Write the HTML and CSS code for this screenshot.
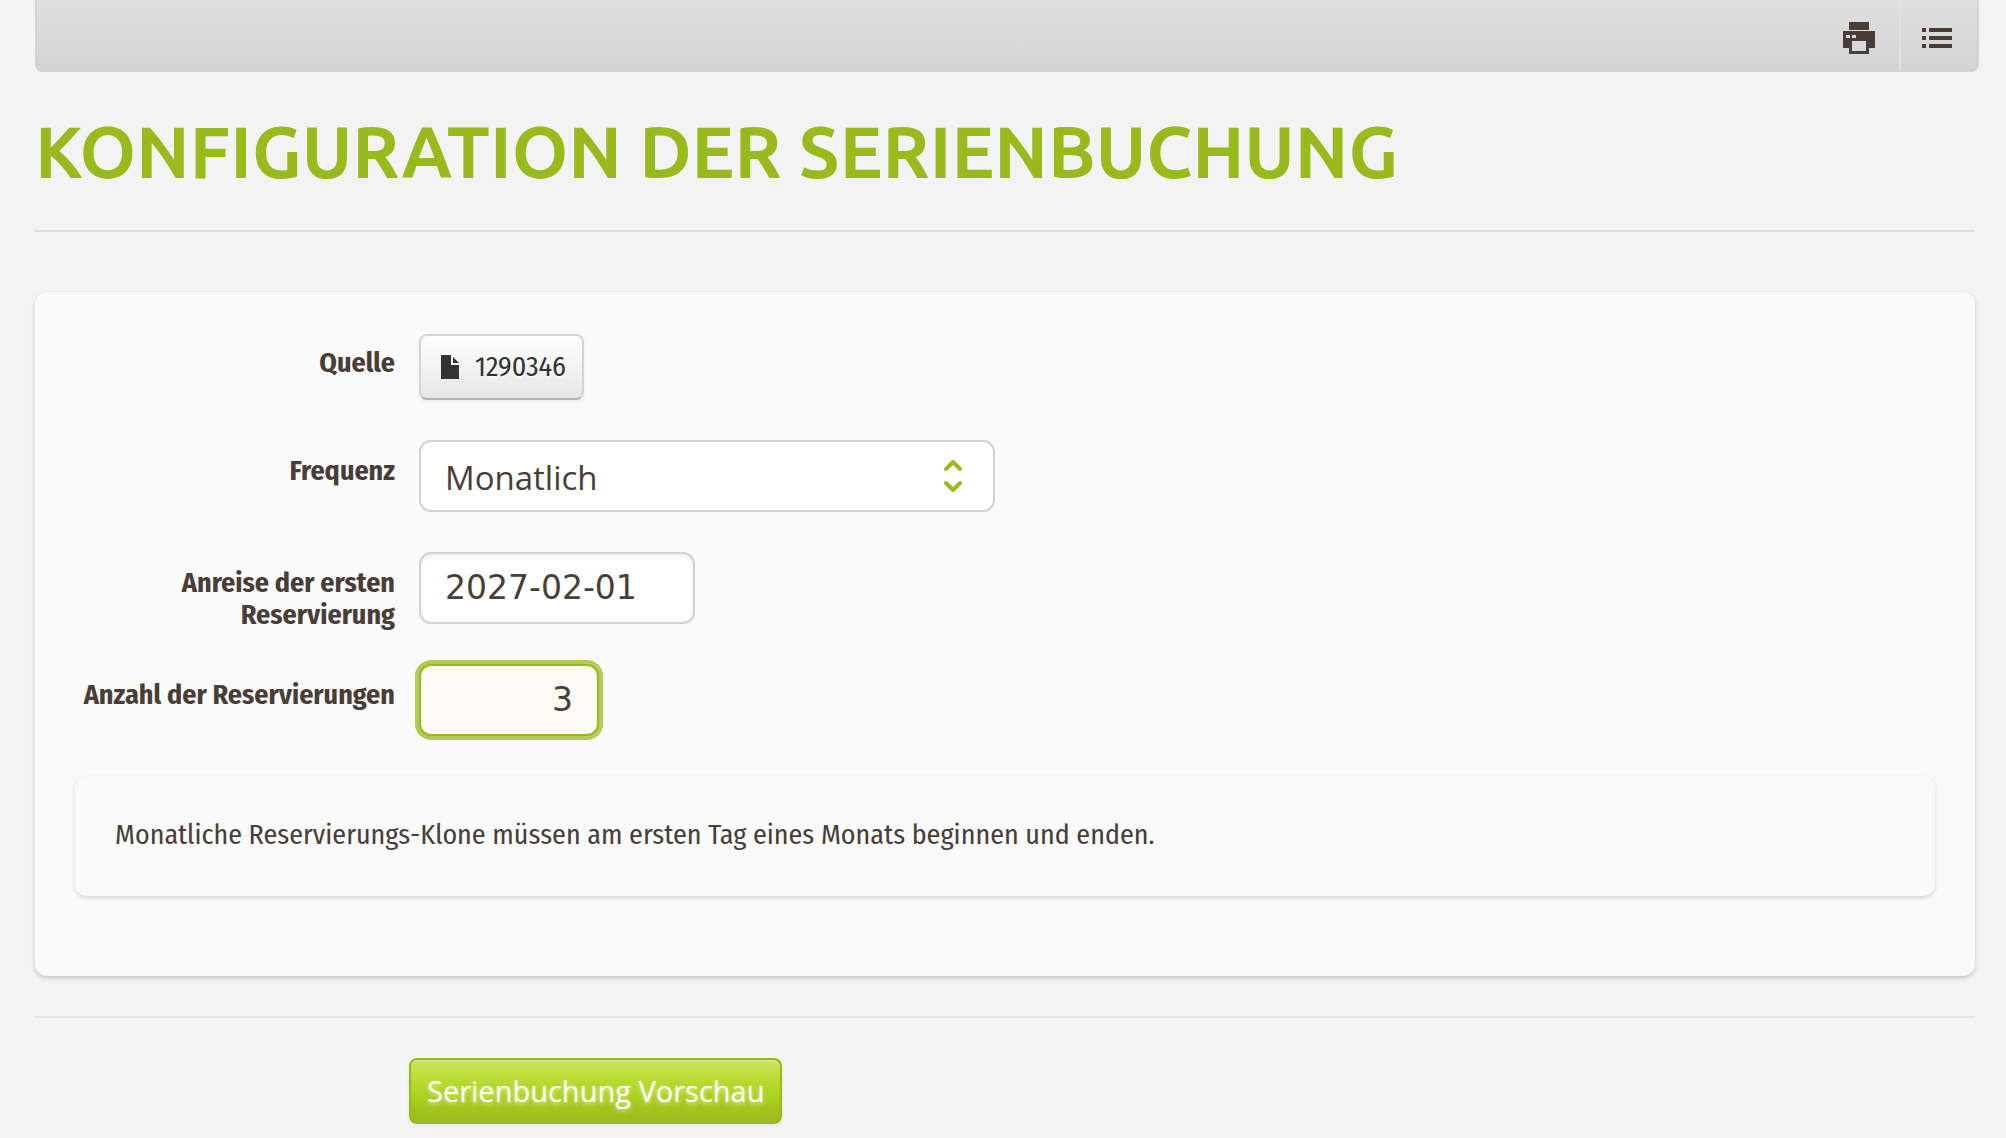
FILE: index.html
```html
<!DOCTYPE html>
<html lang="de">
<head>
    <meta charset="UTF-8">
    <meta name="viewport" content="width=device-width, initial-scale=1.0">
    <title>Konfiguration der Serienbuchung</title>
    <link rel="stylesheet" href="styles.css">
</head>
<body>
    <nav class="toolbar">
        <a class="toolbar-link" href="#print" aria-label="Drucken">
            <svg class="icon" viewBox="0 0 32 32" fill="currentColor">
                <path d="M6 0h20v8H6z"/>
                <path fill-rule="evenodd" d="M0 9h32v17h-6v6H6v-6H0zM3 13v3h4v-3zM9 13v3h4v-3zM9 19v10h14V19z"/>
            </svg>
        </a>
        <a class="toolbar-link" href="#list" aria-label="Liste">
            <svg class="icon" viewBox="0 0 32 32" fill="currentColor">
                <path d="M1 6h4v4H1zM8 6h23v4H8zM1 14h4v4H1zM8 14h23v4H8zM1 22h4v4H1zM8 22h23v4H8z"/>
            </svg>
        </a>
    </nav>
    <main class="content">
        <h1>Konfiguration der Serienbuchung</h1>
        <form>
            <div class="panel">
                <div class="form-row">
                    <span class="form-label">Quelle</span>
                    <a class="source-button" href="#1290346">
                        <svg class="icon-file" viewBox="0 0 18 24" fill="currentColor">
                            <path d="M0 0h10v10h8v14H0z"/>
                            <path d="M12 2l6 6h-6z"/>
                        </svg>
                        1290346
                    </a>
                </div>
                <div class="form-row">
                    <label class="form-label" for="frequency">Frequenz</label>
                    <div class="select-box">
                        <select id="frequency">
                            <option>Monatlich</option>
                        </select>
                        <svg class="select-arrows" viewBox="0 0 20 34" fill="none" stroke="currentColor" stroke-width="4" stroke-linecap="round" stroke-linejoin="round">
                            <path d="M3 10l7-7 7 7M3 24l7 7 7-7"/>
                        </svg>
                    </div>
                </div>
                <div class="form-row">
                    <label class="form-label" for="arrival">Anreise der ersten Reservierung</label>
                    <input class="date-input" type="text" id="arrival" value="2027-02-01">
                </div>
                <div class="form-row">
                    <label class="form-label" for="count">Anzahl der Reservierungen</label>
                    <input class="count-input" type="text" inputmode="numeric" id="count" value="3">
                </div>
                <p class="hint">Monatliche Reservierungs-Klone müssen am ersten Tag eines Monats beginnen und enden.</p>
            </div>
            <div class="form-actions">
                <button type="submit">Serienbuchung Vorschau</button>
            </div>
        </form>
    </main>
</body>
</html>
```
FILE: styles.css
```css
* {
    box-sizing: border-box;
}
body {
    margin: 0;
    background-color: #f3f3f3;
    color: #483e37;
    font-family: "Fira Sans Condensed", "Roboto Condensed", "Open Sans", sans-serif;
    font-size: 28px;
    line-height: 32px;
}
.toolbar {
    display: flex;
    justify-content: flex-end;
    height: 72px;
    margin: 0 27px 0 35px;
    border: 2px solid #d3d3d3;
    border-top: 0;
    border-radius: 0 0 8px 8px;
    background-image: linear-gradient(#e0e0e0, #d3d3d3);
}
.toolbar-link {
    display: flex;
    align-items: center;
    padding: 6px 24px 0 20px;
    color: #483e37;
}
.toolbar-link + .toolbar-link {
    border-left: 2px solid #e2e2e2;
}
.icon {
    width: 32px;
    height: 32px;
}
.content {
    margin: 0 31px 0 35px;
}
h1 {
    margin: 0 0 60px;
    padding: 36px 0 34px;
    border-bottom: 2px solid #dddddd;
    color: #99ba1c;
    font-family: Ubuntu, Lato, sans-serif;
    font-size: 72px;
    font-weight: 700;
    line-height: 88px;
    text-transform: uppercase;
}
.panel {
    margin-bottom: 40px;
    padding: 42px 40px 80px;
    border-radius: 12px;
    background-color: #fafafa;
    box-shadow: 0 2px 4px rgba(0, 0, 0, 0.2);
}
.form-row {
    display: flex;
    align-items: flex-start;
    margin-bottom: 40px;
}
.form-label {
    flex: none;
    width: 320px;
    margin-right: 24px;
    padding-top: 13px;
    font-weight: 700;
    text-align: right;
}
label.form-label {
    height: 72px;
    padding-top: 15px;
}
.source-button {
    display: flex;
    align-items: center;
    gap: 16px;
    height: 66px;
    padding: 0 16px 0 20px;
    border: 2px solid #d4d4d4;
    border-bottom-color: #b3b3b3;
    border-radius: 8px;
    background-image: linear-gradient(#ffffff, #e6e6e6);
    box-shadow: 0 2px 4px rgba(0, 0, 0, 0.05);
    color: #333333;
    text-decoration: none;
    text-shadow: 0 2px 2px rgba(255, 255, 255, 0.75);
}
.icon-file {
    width: 18px;
    height: 24px;
}
input,
select {
    height: 72px;
    padding: 0 24px;
    border: 2px solid #d5d1ce;
    border-radius: 12px;
    background-color: #ffffff;
    color: #483e37;
    font-family: "Lucida Grande", "DejaVu Sans", sans-serif;
    font-size: 33px;
}
input {
    padding-bottom: 2px;
    box-shadow: inset 0 2px 4px rgba(0, 0, 0, 0.08);
}
.select-box {
    position: relative;
    width: 576px;
}
select {
    appearance: none;
    width: 100%;
    padding-top: 2px;
    font-family: "Lucida Grande", "Open Sans", sans-serif;
}
.select-arrows {
    position: absolute;
    top: 19px;
    right: 32px;
    width: 20px;
    height: 34px;
    color: #99ba1c;
    pointer-events: none;
}
.date-input {
    width: 276px;
}
.count-input {
    width: 180px;
    border-color: #99ba1c;
    background-color: #fcfcf4;
    box-shadow: 0 0 0 4px #b3cb5a;
    text-align: right;
}
.hint {
    margin: 0;
    padding: 43px 40px 45px;
    border-radius: 12px;
    background-color: #fafafa;
    box-shadow: 0 2px 4px rgba(0, 0, 0, 0.15);
}
.form-actions {
    min-height: 122px;
    padding: 40px 374px 14px;
    border-top: 2px solid #e5e5e5;
    background-color: #f4f4f4;
}
button {
    height: 66px;
    padding: 0 16px 2px;
    border: 2px solid #99ba1c;
    border-radius: 8px;
    background-image: linear-gradient(#c9e65c, #aed520 50%, #99ba1c);
    box-shadow: inset 0 2px 0 rgba(255, 255, 255, 0.2), 0 2px 4px rgba(0, 0, 0, 0.05);
    color: #ffffff;
    font-family: "Lucida Grande", "Open Sans", sans-serif;
    font-size: 29px;
    text-shadow: 0 2px 4px rgba(255, 255, 255, 0.6);
    white-space: nowrap;
}
```
